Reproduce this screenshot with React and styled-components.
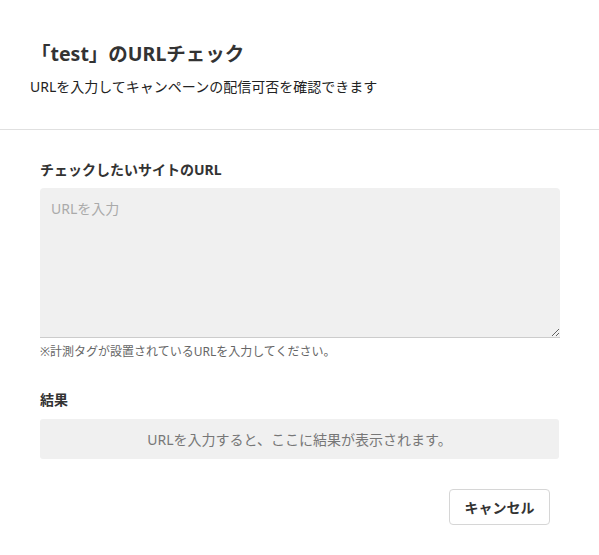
import React from "react";
import styled, { createGlobalStyle } from "styled-components";

const Global = createGlobalStyle`
  html, body { margin: 0; padding: 0; background: #fff; }
  body { font-family: "Noto Sans", "Noto Sans CJK JP", sans-serif; color: #333; }
  * { box-sizing: border-box; }
`;

const Modal = styled.div`
  width: 599px;
  min-height: 555px;
  background: #fff;
  display: flex;
  flex-direction: column;
`;

const Header = styled.header`
  padding: 40px 30px 32px 31px;
  border-bottom: 1px solid #e0e0e0;
  display: flex;
  flex-direction: column;
  gap: 9px;
`;

const Title = styled.h1`
  margin: 0;
  font-size: 19.5px;
  line-height: 28px;
  font-weight: 700;
  color: #333;
`;

const Subtitle = styled.p`
  margin: 0 0 0 -1px;
  font-size: 14px;
  line-height: 20px;
  color: #222;
`;

const Body = styled.div`
  padding: 30px 40px 0;
  display: flex;
  flex-direction: column;
`;

const Section = styled.section`
  display: flex;
  flex-direction: column;
  margin-bottom: ${(p) => p.$mb || 0}px;
`;

const Label = styled.label`
  font-size: 14px;
  font-weight: 700;
  line-height: 20px;
  color: #333;
  margin-bottom: ${(p) => p.$mb || 8}px;
`;

const TextArea = styled.textarea`
  display: block;
  width: 520px;
  height: 150px;
  background: #f0f0f0;
  border: none;
  border-bottom: 1px solid #ccc;
  border-radius: 4px 4px 0 0;
  padding: 11px 11px;
  font-family: inherit;
  font-size: 14px;
  line-height: 20px;
  color: #333;
  outline: none;
  resize: vertical;
  &::placeholder { color: #aaa; }
`;

const Help = styled.p`
  margin: 5px 0 0;
  font-size: 12px;
  line-height: 18px;
  color: #666;
`;

const ResultBox = styled.div`
  height: 40px;
  border-radius: 3px;
  background: #f0f0f0;
  display: flex;
  align-items: center;
  justify-content: center;
  font-size: 14px;
  color: #777;
`;

const Footer = styled.footer`
  display: flex;
  justify-content: flex-end;
  padding: 30px 49px 0 0;
`;

const Button = styled.button`
  width: 101px;
  height: 36px;
  border: 1px solid #d6d6d6;
  border-radius: 4px;
  background: #fff;
  font-family: inherit;
  font-size: 14px;
  font-weight: 700;
  color: #333;
  cursor: pointer;
`;

export default function App() {
  return (
    <>
      <Global />
      <Modal>
        <Header>
          <Title>「test」のURLチェック</Title>
          <Subtitle>URLを入力してキャンペーンの配信可否を確認できます</Subtitle>
        </Header>
        <Body>
          <Section $mb={29}>
            <Label>チェックしたいサイトのURL</Label>
            <TextArea placeholder="URLを入力" />
            <Help>※計測タグが設置されているURLを入力してください。</Help>
          </Section>
          <Section>
            <Label $mb={9}>結果</Label>
            <ResultBox>URLを入力すると、ここに結果が表示されます。</ResultBox>
          </Section>
        </Body>
        <Footer>
          <Button>キャンセル</Button>
        </Footer>
      </Modal>
    </>
  );
}
